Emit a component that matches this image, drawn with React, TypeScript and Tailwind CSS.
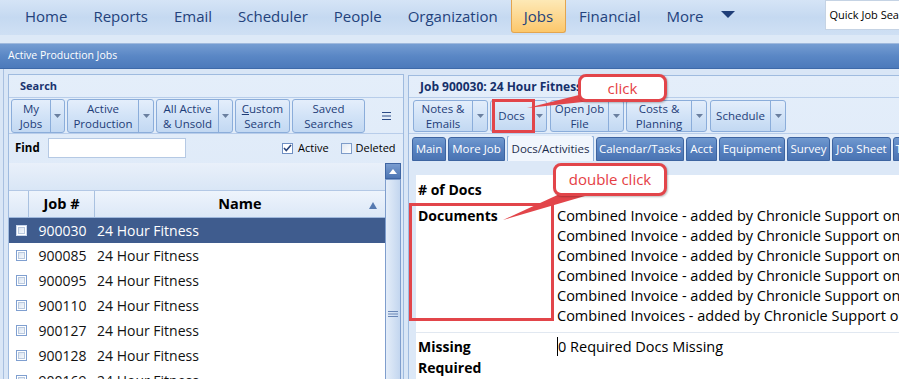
import React from "react"

const navItems = ["Home", "Reports", "Email", "Scheduler", "People", "Organization", "Jobs", "Financial", "More"]

const jobs = [
  { id: "900030", name: "24 Hour Fitness", selected: true },
  { id: "900085", name: "24 Hour Fitness" },
  { id: "900095", name: "24 Hour Fitness" },
  { id: "900110", name: "24 Hour Fitness" },
  { id: "900127", name: "24 Hour Fitness" },
  { id: "900128", name: "24 Hour Fitness" },
  { id: "900169", name: "24 Hour Fitness" },
]

const docs = [
  "Combined Invoice - added by Chronicle Support on 3/12/2020 10:41 AM",
  "Combined Invoice - added by Chronicle Support on 3/12/2020 10:42 AM",
  "Combined Invoice - added by Chronicle Support on 3/12/2020 10:44 AM",
  "Combined Invoice - added by Chronicle Support on 3/12/2020 10:45 AM",
  "Combined Invoice - added by Chronicle Support on 3/12/2020 10:47 AM",
  "Combined Invoices - added by Chronicle Support on 3/12/2020 10:49 AM",
]

const tabs = [
  { label: "Main", w: "w-[34px]" },
  { label: "More Job", w: "w-[57px]" },
  { label: "Docs/Activities", w: "w-[87px]", active: true },
  { label: "Calendar/Tasks", w: "w-[88px]" },
  { label: "Acct", w: "w-[31px]" },
  { label: "Equipment", w: "w-[66px]" },
  { label: "Survey", w: "w-[43px]" },
  { label: "Job Sheet", w: "w-[59px]" },
  { label: "Tracking", w: "w-[50px]" },
]

function DropArrow() {
  return (
    <svg width="7" height="4" viewBox="0 0 7 4">
      <path d="M0 0h7L3.5 4z" fill="#6a7f9f" />
    </svg>
  )
}

interface SplitBtnProps {
  label: React.ReactNode
  mainW: string
  ddW?: string
  h: string
  className?: string
}

function SplitBtn({ label, mainW, ddW, h, className = "" }: SplitBtnProps) {
  return (
    <div
      className={`flex shrink-0 ${h} border border-[#8badda] rounded-[3px] bg-gradient-to-b from-[#e4eefb] via-[#d2e3f7] to-[#c2d8f2] ${className}`}
    >
      <div
        className={`${mainW} flex items-center justify-center text-center leading-[15px] text-[11.5px] text-[#1e3d78]`}
      >
        <div>{label}</div>
      </div>
      {ddW && (
        <div className={`${ddW} border-l border-[#8badda] flex items-center justify-center`}>
          <DropArrow />
        </div>
      )}
    </div>
  )
}

function RowCheck({ light }: { light?: boolean }) {
  return (
    <div className={`w-[11px] h-[11px] border ${light ? "border-[#c9d7ec]" : "border-[#7f9fd0]"} bg-white p-[1px]`}>
      <div className="w-full h-full border border-[#b9c9df] bg-gradient-to-br from-[#dce5f1] to-[#f4f7fb]" />
    </div>
  )
}

function TopNav() {
  return (
    <div className="h-[35px] flex items-start pl-[12px] bg-gradient-to-b from-[#d5e4f6] via-[#c5d9f1] to-[#cfe0f4] overflow-hidden">
      {navItems.map((item) =>
        item === "Jobs" ? (
          <div
            key={item}
            className="h-[33px] px-[12px] flex items-center border border-t-0 border-[#e3a54f] rounded-b-[3px] bg-gradient-to-b from-[#fde9b6] to-[#fcc76a] text-[15px] text-[#23427c]"
          >
            {item}
          </div>
        ) : (
          <div key={item} className="h-[33px] px-[13px] flex items-center text-[15px] text-[#23427c]">
            {item}
          </div>
        )
      )}
      <svg className="mt-[11px] ml-[4px] shrink-0" width="14" height="7" viewBox="0 0 14 7">
        <path d="M0 0h14L7 7z" fill="#1f3e78" />
      </svg>
      <div className="ml-[90px] shrink-0 w-[120px] h-[30px] bg-white border border-[#c5d3e4] flex items-center pl-[4px] text-[11px] text-black whitespace-nowrap">
        Quick Job Search
      </div>
    </div>
  )
}

function LeftPanel() {
  return (
    <div className="w-[396px] h-[306px] shrink-0 border border-b-0 border-[#9fbbdf] flex flex-col bg-gradient-to-b from-[#e4eefa] to-[#d5e3f5]">
      {/* search header */}
      <div className="h-[22px] flex items-center pl-[11px] text-[11px] font-bold text-[#1a3470]">Search</div>

      {/* search buttons */}
      <div className="h-[37px] flex items-center gap-[2px] pl-[2px] border-y border-[#b8cdea]">
        <SplitBtn h="h-[34px]" mainW="w-[38px]" ddW="w-[14px]" label={<>My<br />Jobs</>} />
        <SplitBtn h="h-[34px]" mainW="w-[70px]" ddW="w-[15px]" label={<>Active<br />Production</>} />
        <SplitBtn h="h-[34px]" mainW="w-[61px]" ddW="w-[14px]" label={<>All Active<br />&amp; Unsold</>} />
        <SplitBtn
          h="h-[34px]"
          mainW="w-[53px]"
          label={
            <>
              <span className="underline">C</span>ustom
              <br />
              Search
            </>
          }
        />
        <SplitBtn h="h-[34px]" mainW="w-[71px]" label={<>Saved<br />Searches</>} />
        <svg className="ml-[15px]" width="9" height="8" viewBox="0 0 9 8">
          <path d="M0 0.5h9M0 4h9M0 7.5h9" stroke="#2a4a86" strokeWidth="1" />
        </svg>
      </div>

      {/* find row */}
      <div className="mt-[4px] h-[20px] flex items-center pl-[6px]">
        <div className="w-[33px] text-[11.5px] font-bold text-black">Find</div>
        <div className="w-[138px] h-[20px] bg-white border border-[#b5c9e4]" />
        <div className="ml-[96px] w-[11px] h-[11px] border border-[#6f8fc2] bg-white flex items-center justify-center">
          <svg width="9" height="8" viewBox="0 0 9 8">
            <path d="M1 4l2.3 2.5L8 1" fill="none" stroke="#29447a" strokeWidth="1.6" />
          </svg>
        </div>
        <div className="ml-[5px] text-[11px] text-black">Active</div>
        <div className="ml-[12px] w-[11px] h-[11px] border border-[#7e9cc9] bg-gradient-to-br from-[#dfe7f2] to-white" />
        <div className="ml-[4px] text-[11px] text-black">Deleted</div>
      </div>

      {/* grid */}
      <div className="mt-[5px] flex flex-1 overflow-hidden">
        <div className="w-[376px] flex flex-col bg-white">
          <div className="h-[28px] shrink-0 bg-gradient-to-b from-[#e9f0fa] to-[#d9e6f6] border-b border-[#b3c8e5]" />
          <div className="h-[27px] shrink-0 flex bg-gradient-to-b from-[#eef4fc] to-[#dce8f7] border-b border-[#9fb9dd] text-[14.5px] font-bold text-black">
            <div className="w-[20px] border-r border-[#a9c1e0]" />
            <div className="w-[66px] border-r border-[#a9c1e0] flex items-center justify-center">Job #</div>
            <div className="flex-1 relative flex items-center justify-center">
              Name
              <svg className="absolute right-[8px] top-[11px]" width="8" height="7" viewBox="0 0 8 7">
                <path d="M4 0L8 7H0z" fill="#5679b0" />
              </svg>
            </div>
          </div>
          {jobs.map((job) => (
            <div
              key={job.id}
              className={`h-[25px] shrink-0 flex items-center text-[14px] ${
                job.selected ? "bg-[#3f5c8e] text-white" : "bg-white text-[#111]"
              }`}
            >
              <div className="w-[20px] flex justify-center pl-[4px]">
                <RowCheck light={job.selected} />
              </div>
              <div className="w-[66px] text-center pl-[1px]">{job.id}</div>
              <div className="pl-[2px]">{job.name}</div>
            </div>
          ))}
        </div>

        {/* scrollbar */}
        <div className="w-[16px] flex flex-col">
          <div className="h-[16px] shrink-0 border border-[#3e65a3] bg-gradient-to-b from-[#7a9dd0] to-[#4d76b4] flex items-center justify-center">
            <svg width="8" height="5" viewBox="0 0 8 5">
              <path d="M4 0L8 5H0z" fill="#ffffff" />
            </svg>
          </div>
          <div className="h-[270px] shrink-0 border border-[#7f9ecd] bg-gradient-to-r from-[#e4edf9] via-[#d4e2f4] to-[#c3d6ef] flex items-center justify-center">
            <svg width="10" height="6" viewBox="0 0 10 6">
              <path d="M0 0.5h10M0 3h10M0 5.5h10" stroke="#6886b6" strokeWidth="1" />
            </svg>
          </div>
        </div>
      </div>
    </div>
  )
}

function RightPanel() {
  return (
    <div className="ml-[4px] mt-[1px] flex-1 h-[305px] border border-b-0 border-r-0 border-[#9fbbdf] flex flex-col bg-gradient-to-b from-[#e4eefa] to-[#d8e5f6]">
      <div className="h-[21px] flex items-center pl-[11px] text-[12px] font-bold text-[#15306a]">
        Job 900030: 24 Hour Fitness
      </div>

      {/* job buttons */}
      <div className="h-[37px] flex items-center pl-[4px] border-y border-[#b8cdea]">
        <SplitBtn h="h-[32px]" mainW="w-[58px]" ddW="w-[15px]" label={<>Notes &amp;<br />Emails</>} />
        <SplitBtn h="h-[32px]" mainW="w-[41px]" ddW="w-[14px]" className="ml-[2px]" label="Docs" />
        <SplitBtn h="h-[32px]" mainW="w-[57px]" ddW="w-[15px]" className="ml-[3px]" label={<>Open Job<br />File</>} />
        <SplitBtn h="h-[32px]" mainW="w-[64px]" ddW="w-[15px]" className="ml-[2px]" label={<>Costs &amp;<br />Planning</>} />
        <SplitBtn h="h-[32px]" mainW="w-[59px]" ddW="w-[15px]" className="ml-[3px]" label="Schedule" />
      </div>

      {/* tabs */}
      <div className="mt-[2px] h-[25px] flex items-end gap-[2px] pl-[3px] overflow-hidden">
        {tabs.map((tab) =>
          tab.active ? (
            <div
              key={tab.label}
              className={`${tab.w} h-[26px] shrink-0 rounded-t-[3px] border border-b-0 border-[#8eb0da] bg-[#f1f6fd] text-[11.5px] text-[#1b2c4c] flex items-center justify-center`}
            >
              {tab.label}
            </div>
          ) : (
            <div
              key={tab.label}
              className={`${tab.w} h-[24px] shrink-0 rounded-t-[3px] border border-[#3d64a1] bg-gradient-to-b from-[#7099cf] via-[#5882c0] to-[#4a74b3] text-[11.5px] text-white flex items-center justify-center`}
            >
              {tab.label}
            </div>
          )
        )}
      </div>

      {/* tab content */}
      <div className="flex-1 bg-[#dce8f7] pl-[7px] pt-[14px]">
        <div className="h-full bg-white overflow-hidden text-black">
          <div className="h-[28px] flex items-center pl-[2px] text-[14px] font-bold">
            # of Docs
          </div>
          <div className="h-[130px] flex pt-[3px] border-b border-[#e1e8f1]">
            <div className="w-[141px] shrink-0 pl-[2px] text-[14px] font-bold leading-[20px]">Documents</div>
            <div className="text-[14.5px] leading-[20px] whitespace-nowrap">
              {docs.map((d, i) => (
                <div key={i}>{d}</div>
              ))}
            </div>
          </div>
          <div className="flex pt-[3px]">
            <div className="w-[141px] shrink-0 pl-[2px] text-[14px] font-bold leading-[21px]">
              Missing
              <br />
              Required
            </div>
            <div className="text-[14.5px] leading-[21px] whitespace-nowrap">
              <span className="border-l border-black">0 Required Docs Missing</span>
            </div>
          </div>
        </div>
      </div>
    </div>
  )
}

export default function App() {
  return (
    <div className="relative w-[899px] h-[379px] overflow-hidden bg-[#d9e6f6] font-['Open_Sans','Noto_Sans',sans-serif]">
      <TopNav />
      <div className="h-[9px] bg-[#dde9f7] border-b border-[#9fb9dd]" />
      <div className="h-[25px] flex items-center pl-[8px] text-[10.5px] text-white bg-gradient-to-b from-[#759dd2] via-[#5a87c5] to-[#4c7abb] border-b border-[#3e6aa9]">
        Active Production Jobs
      </div>

      <div className="h-[310px] ml-[3px] border-l border-[#a8c0e0] pl-[4px] pt-[5px] flex">
        <LeftPanel />
        <RightPanel />
      </div>

      {/* annotations */}
      <svg className="absolute left-0 top-0 pointer-events-none" width="899" height="379" viewBox="0 0 899 379">
        <polygon points="579,95 592,101 527,108" fill="#e2454a" />
        <polygon points="564,192 585,196 503,220" fill="#e2454a" />
      </svg>
      <div className="absolute left-[492px] top-[99px] w-[43px] h-[34px] border-[3px] border-[#e2454a]" />
      <div className="absolute left-[409px] top-[203px] w-[145px] h-[118px] border-[3px] border-[#e2454a]" />
      <div className="absolute left-[578px] top-[74px] w-[89px] h-[28px] rounded-[8px] border-[3px] border-[#e2454a] bg-white shadow-[1px_1px_2px_rgba(0,0,0,0.25)] flex items-center justify-center text-[15px] text-[#e53e44]">
        click
      </div>
      <div className="absolute left-[553px] top-[163px] w-[114px] h-[33px] rounded-[8px] border-[3px] border-[#e2454a] bg-white shadow-[1px_1px_2px_rgba(0,0,0,0.25)] flex items-center justify-center text-[15px] text-[#e53e44]">
        double click
      </div>
    </div>
  )
}
